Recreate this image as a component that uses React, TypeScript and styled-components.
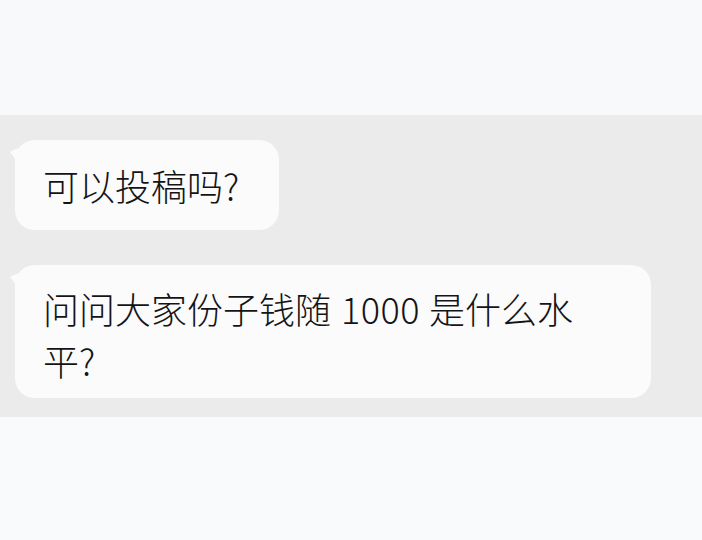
import React from "react";
import styled, { createGlobalStyle } from "styled-components";

const GlobalStyle = createGlobalStyle`
  html, body {
    margin: 0;
    padding: 0;
    background: #f8f9fa;
  }
  #root {
    width: 702px;
    height: 540px;
  }
`;

const Page = styled.div`
  width: 702px;
  height: 540px;
  display: flex;
  flex-direction: column;
  background: #f8f9fa;
  font-family: "Noto Sans CJK SC", "Noto Sans", sans-serif;
`;

const TopArea = styled.div`
  height: 115px;
  flex: none;
  background: #f8f9fa;
`;

const ChatBand = styled.div`
  flex: none;
  display: flex;
  flex-direction: column;
  align-items: flex-start;
  gap: 35px;
  padding: 25px 0 19px 15px;
  background: #ebebec;
`;

const BottomArea = styled.div`
  flex: 1;
  background: #f9fafb;
`;

const Bubble = styled.div<{ $wide?: boolean }>`
  position: relative;
  box-sizing: border-box;
  width: ${(p) => (p.$wide ? "636px" : "auto")};
  background: #fbfbfc;
  border-radius: 20px;
  padding: ${(p) => (p.$wide ? "17px 50px 12px 28px" : "19px 40px 19px 28px")};
  color: #141416;
  font-size: 36px;
  font-weight: 300;
  line-height: 52px;
  &::before {
    content: "";
    position: absolute;
    left: -5px;
    top: 8px;
    width: 0;
    height: 0;
    border-top: 4px solid transparent;
    border-bottom: 10px solid transparent;
    border-right: 8px solid #fbfbfc;
  }
`;

const Segment = styled.span`
  letter-spacing: 0;
`;

const Digits = styled.span`
  padding: 0 9px 0 10px;
  letter-spacing: 0.5px;
`;

export default function App() {
  return (
    <>
      <GlobalStyle />
      <Page>
        <TopArea />
        <ChatBand>
          <Bubble>可以投稿吗?</Bubble>
          <Bubble $wide>
            <Segment>问问大家份子钱随</Segment>
            <Digits>1000</Digits>
            <Segment>是什么水</Segment>
            <Segment>平?</Segment>
          </Bubble>
        </ChatBand>
        <BottomArea />
      </Page>
    </>
  );
}
